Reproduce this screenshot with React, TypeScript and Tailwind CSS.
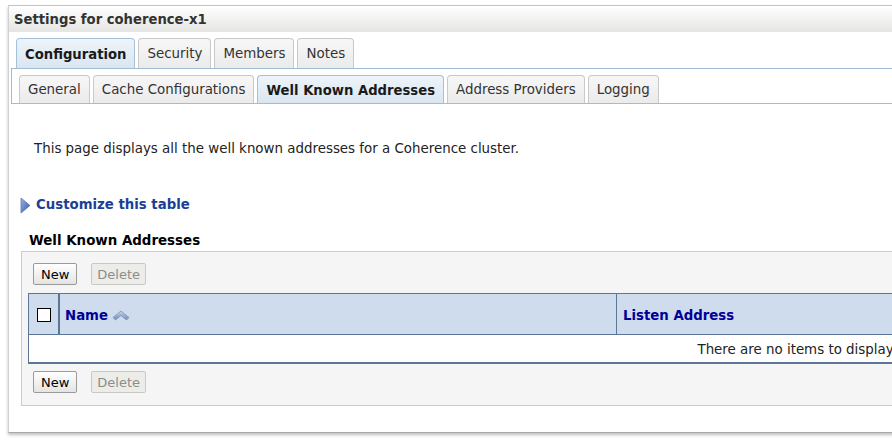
import React from 'react';

const mainTabs = ['Configuration', 'Security', 'Members', 'Notes'];
const subTabs = ['General', 'Cache Configurations', 'Well Known Addresses', 'Address Providers', 'Logging'];

const Tab = ({ label, active, tall }: { label: string; active?: boolean; tall?: boolean }) => (
  <div
    className={
      'flex items-center px-[8px] pt-[2px] rounded-t-[4px] border border-b-0 whitespace-nowrap ' +
      (tall ? 'h-[30px] ' : 'h-[28px] ') +
      (active
        ? 'bg-gradient-to-b from-[#eef4f9] to-[#d9e6f1] border-[#a4c1da] font-bold text-[13.2px] text-[#1a1a1a]'
        : 'bg-gradient-to-b from-[#f7f7f7] to-[#ebebeb] border-[#c9c9c9] text-[13.4px] text-[#333]')
    }
  >
    {label}
  </div>
);

const Btn = ({ label, disabled }: { label: string; disabled?: boolean }) => (
  <button
    className={
      'h-[22px] text-[13px] leading-none border rounded-[2px] ' +
      (disabled
        ? 'px-[5px] bg-[#ecece9] border-[#c9c9c6] text-[#8c8c8c]'
        : 'px-[7px] bg-gradient-to-b from-white to-[#e4e4e2] border-[#9a9a9a] text-black')
    }
  >
    {label}
  </button>
);

const App = () => {
  return (
    <div
      className="w-[892px] h-[442px] bg-white overflow-hidden text-[13.4px]"
      style={{ fontFamily: '"DejaVu Sans", Verdana, sans-serif' }}
    >
      <div className="ml-[8px] mt-[5px] w-[920px] h-[428px] border-l border-[#d0d0d0] border-b border-b-[#a8a8a8] shadow-[0_2px_3px_rgba(0,0,0,0.25)]">
        {/* title bar */}
        <div className="h-[27px] border-t border-[#c4c4c4] bg-gradient-to-b from-white to-[#e5e5e3] flex items-center pl-[5px] pt-[1px] font-bold text-[13.2px] text-[#333]">
          Settings for coherence-x1
        </div>

        {/* main tabs */}
        <div className="flex items-end gap-[3px] pl-[7px] mt-[6px]">
          {mainTabs.map((t, i) => (
            <Tab key={t} label={t} active={i === 0} tall />
          ))}
        </div>

        {/* sub tabs */}
        <div className="ml-[2px] h-[36px] border-t border-l border-b border-[#9fbdd7] flex items-end gap-[3px] pl-[7px]">
          {subTabs.map((t, i) => (
            <Tab key={t} label={t} active={i === 2} />
          ))}
        </div>

        <p className="mt-[35px] ml-[25px] text-[#222]">
          This page displays all the well known addresses for a Coherence cluster.
        </p>

        <div className="mt-[36px] ml-[11px] flex items-center gap-[5px]">
          <svg width="11" height="17" viewBox="0 0 11 17">
            <defs>
              <linearGradient id="tri" x1="0" y1="0" x2="1" y2="1">
                <stop offset="0" stopColor="#9fb6e0" />
                <stop offset="1" stopColor="#2e55a8" />
              </linearGradient>
            </defs>
            <path d="M1 1 L10 8.5 L1 16 Z" fill="url(#tri)" stroke="#5a78b8" strokeWidth="0.8" />
          </svg>
          <span className="font-bold text-[13.3px] text-[#1c3f94]">Customize this table</span>
        </div>

        <div className="mt-[16px] ml-[20px] font-bold text-[13.4px] text-black">Well Known Addresses</div>

        <div className="ml-[12px] h-[155px] bg-[#f5f5f5] border border-[#cccccc] pl-[12px] pt-[11px]">
          <div className="flex gap-[14px] -ml-[1px]">
            <Btn label="New" />
            <Btn label="Delete" disabled />
          </div>

          <div className="mt-[8px] -ml-[6px] w-[900px] border-t border-l border-b-2 border-[#5c7697]">
            <div className="flex h-[41px] bg-[#cfdcee] border-b border-[#5c7697]">
              <div className="w-[31px] border-r-2 border-[#5c7697] flex items-center justify-center pt-[2px]">
                <div className="w-[14px] h-[14px] border border-black bg-white" />
              </div>
              <div className="w-[557px] border-r border-[#5c7697] flex items-center pl-[5px] pt-[3px] gap-[4px]">
                <span className="font-bold text-[13.3px] text-[#000099]">Name</span>
                <svg width="18" height="11" viewBox="0 0 18 11">
                  <defs>
                    <linearGradient id="sort" x1="0" y1="0" x2="0" y2="1">
                      <stop offset="0" stopColor="#c9d6ea" />
                      <stop offset="1" stopColor="#6f8cb8" />
                    </linearGradient>
                  </defs>
                  <path d="M1 7.5 L9 1 L17 7.5 L14.5 10 L9 5.5 L3.5 10 Z" fill="url(#sort)" stroke="#7d93b5" strokeWidth="0.8" />
                </svg>
              </div>
              <div className="flex-1 flex items-center pl-[6px] pt-[3px]">
                <span className="font-bold text-[13.3px] text-[#000099]">Listen Address</span>
              </div>
            </div>
            <div className="h-[27px] bg-white flex items-center justify-end pr-[32px] pt-[2px] text-[#222]">
              There are no items to display.
            </div>
          </div>

          <div className="flex gap-[14px] -ml-[1px] mt-[7px]">
            <Btn label="New" />
            <Btn label="Delete" disabled />
          </div>
        </div>
      </div>
    </div>
  );
};

export default App;
